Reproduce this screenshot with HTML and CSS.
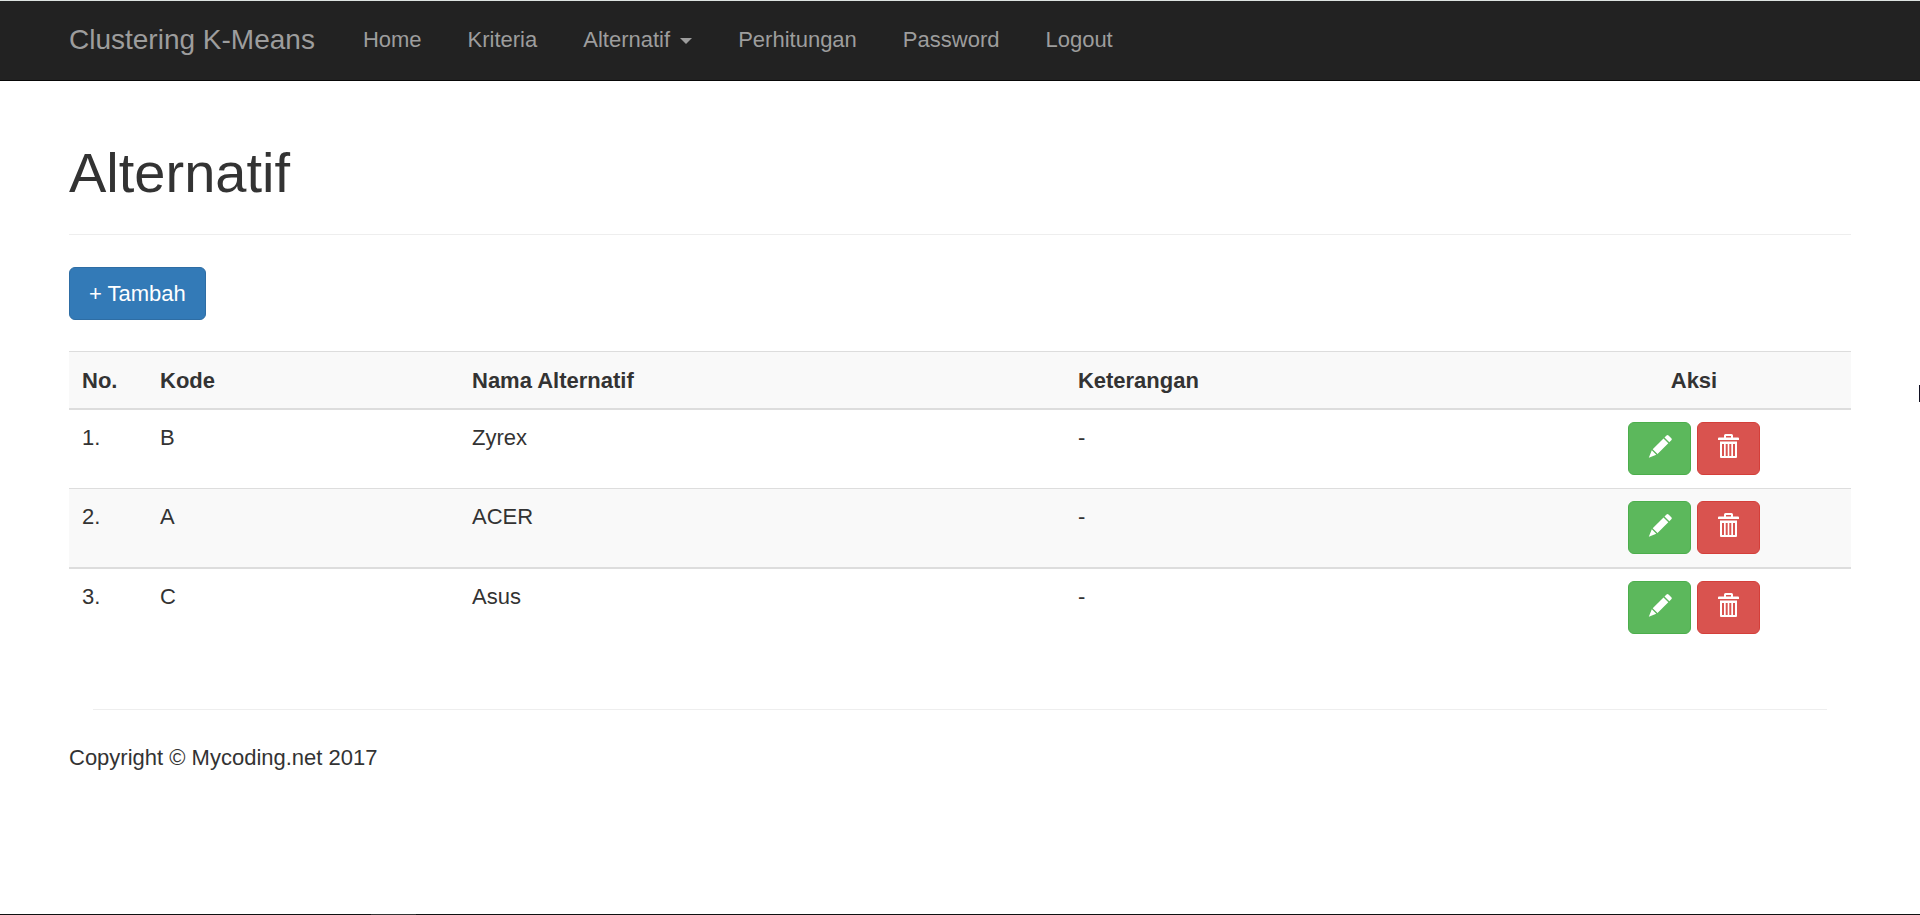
FILE: index.html
```html
<!DOCTYPE html>
<html lang="id">
<head>
<meta charset="utf-8">
<meta name="viewport" content="width=device-width, initial-scale=1">
<title>Clustering K-Means</title>
<link rel="stylesheet" href="styles.css">
</head>
<body>
<svg class="sprite" aria-hidden="true">
  <symbol id="pencil" viewBox="0 0 24 24">
    <path d="M18.500 1.400q1-1 2 0l2.800 2.800q1 1 0 2L21.300 8.200 16.500 3.400zM15.500 4.400l4.800 4.800L9.500 20 4.700 15.200zM3.800 16.200l4.500 4.500L.800 23.700z"/>
  </symbol>
  <symbol id="trash" viewBox="0 0 21 24">
    <path fill-rule="evenodd" d="M6 3.500V1.500Q6 0 7.500 0h6Q15 0 15 1.500v2h5q1 0 1 1V6H0V4.500q0-1 1-1zM8 3.500h5V2H8zM2 7.500h17V23q0 1-1 1H3q-1 0-1-1zM4 10v12h2V10zm3.700 0v12h2V10zm3.600 0v12h2V10zM15 10v12h2V10z"/>
  </symbol>
</svg>
<header class="navbar">
  <nav class="container navbar-inner">
    <a class="brand" href="#">Clustering K-Means</a>
    <a class="nav-link" href="#">Home</a>
    <a class="nav-link" href="#">Kriteria</a>
    <a class="nav-link" href="#">Alternatif <span class="caret"></span></a>
    <a class="nav-link" href="#">Perhitungan</a>
    <a class="nav-link" href="#">Password</a>
    <a class="nav-link" href="#">Logout</a>
  </nav>
</header>
<main class="container">
  <div class="page-header"><h1>Alternatif</h1></div>
  <a class="btn btn-primary" href="#">+ Tambah</a>
  <table class="table">
    <thead>
      <tr><th class="col-no">No.</th><th class="col-code">Kode</th><th class="col-name">Nama Alternatif</th><th>Keterangan</th><th class="col-action">Aksi</th></tr>
    </thead>
    <tbody>
      <tr>
        <td>1.</td><td>B</td><td>Zyrex</td><td>-</td>
        <td><div class="actions"><button class="btn btn-success" aria-label="Ubah"><svg class="pencil"><use href="#pencil"/></svg></button><button class="btn btn-danger" aria-label="Hapus"><svg class="trash"><use href="#trash"/></svg></button></div></td>
      </tr>
    </tbody>
    <tbody>
      <tr class="shaded">
        <td>2.</td><td>A</td><td>ACER</td><td>-</td>
        <td><div class="actions"><button class="btn btn-success" aria-label="Ubah"><svg class="pencil"><use href="#pencil"/></svg></button><button class="btn btn-danger" aria-label="Hapus"><svg class="trash"><use href="#trash"/></svg></button></div></td>
      </tr>
    </tbody>
    <tbody class="divided">
      <tr>
        <td>3.</td><td>C</td><td>Asus</td><td>-</td>
        <td><div class="actions"><button class="btn btn-success" aria-label="Ubah"><svg class="pencil"><use href="#pencil"/></svg></button><button class="btn btn-danger" aria-label="Hapus"><svg class="trash"><use href="#trash"/></svg></button></div></td>
      </tr>
    </tbody>
  </table>
</main>
<footer class="container footer">
  <hr>
  <p>Copyright © Mycoding.net 2017</p>
</footer>
<div class="edge-mark"></div>
<div class="bottom-edge"></div>
</body>
</html>
```
FILE: styles.css
```css
* { box-sizing: border-box; }
body {
  margin: 0;
  min-height: 100vh;
  font: 22px/31px "Liberation Sans", Arial, sans-serif;
  color: #333;
  background: #fff;
}
.sprite { display: none; }
.container { width: calc(100% - 48px); max-width: 1782px; margin: 0 auto; }

.navbar { background: #222; border-top: 1px solid #dde3e1; border-bottom: 1px solid #080808; }
.navbar-inner { display: flex; flex-wrap: wrap; align-items: center; }
.navbar a { color: #9d9d9d; text-decoration: none; }
.brand { padding: 23px 25px 25px 0; font-size: 28px; }
.nav-link { padding: 23px 23px 25px; }
.caret {
  display: inline-block;
  margin-left: 4px;
  vertical-align: middle;
  border-top: 6px solid;
  border-left: 6px solid transparent;
  border-right: 6px solid transparent;
}

.page-header { margin: 61px 0 32px; padding-bottom: 30px; border-bottom: 1px solid #eee; }
h1 { margin: 0; font-size: 56px; line-height: 62px; font-weight: 500; }

.btn {
  display: inline-block;
  padding: 10px 19px;
  border: 1px solid;
  border-radius: 6px;
  font: inherit;
  color: #fff;
  text-decoration: none;
  cursor: pointer;
}
.btn-primary { background: #337ab7; border-color: #2e6da4; }
.btn-success { background: #5cb85c; border-color: #4cae4c; }
.btn-danger { background: #d9534f; border-color: #d43f3a; }

.table { width: 100%; margin: 31px 0; border-spacing: 0; table-layout: fixed; }
th, td { padding: 12px 13px 13px; text-align: left; vertical-align: top; border-top: 1px solid #ddd; }
thead th, .shaded td { background: #f9f9f9; }
thead th { padding-top: 13px; padding-bottom: 12px; border-bottom: 2px solid #ddd; }
thead + tbody td { border-top: 0; }
.divided td { border-top: 2px solid #ddd; }
.col-no { width: 78px; }
.col-code { width: 312px; }
.col-name { width: 34%; }
.col-action { width: 314px; text-align: center; }
.actions { display: flex; justify-content: center; gap: 6px; }
.actions .btn { display: flex; justify-content: center; align-items: flex-start; width: 63px; height: 53px; padding-top: 11px; }
.actions svg { flex: none; fill: currentColor; height: 24px; }
.pencil { width: 24px; }
.trash { width: 21px; }

.footer hr { margin: 0 24px 32px; border: 0; border-top: 1px solid #eee; }
.footer { padding-top: 31px; }
.footer p { margin: 0; }

.edge-mark { position: absolute; right: 0; top: 385px; width: 1px; height: 17px; background: #112; }
.bottom-edge {
  position: fixed;
  left: 0;
  right: 0;
  bottom: 0;
  height: 1px;
  background: linear-gradient(90deg, #111 371px, #333 371px 416px, #111 416px);
}
```
